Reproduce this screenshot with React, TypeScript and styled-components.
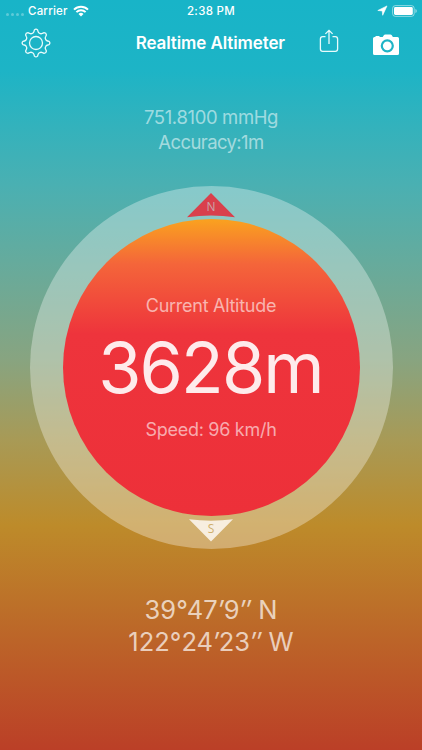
// App.tsx

import styled, { createGlobalStyle } from 'styled-components';

const reading = {
  pressure: '751.8100 mmHg',
  accuracy: 'Accuracy:1m',
  altitude: '3628m',
  speed: 'Speed: 96 km/h',
};

const WifiIcon = () => (
  <svg width="16" height="12" viewBox="0 0 16 12" fill="none" stroke="#fff" strokeWidth="2">
    <path d="M1 4.6a10 10 0 0 1 14 0" />
    <path d="M3.4 7.1a6.6 6.6 0 0 1 9.2 0" />
    <path d="M8 11.6 5.5 9a3.5 3.5 0 0 1 5 0z" fill="#fff" stroke="none" />
  </svg>
);

const LocationIcon = () => (
  <svg width="11" height="11" viewBox="0 0 11 11" fill="#fff">
    <path d="M10 .9.8 5.5l4.4.4.5 4.4z" stroke="#fff" strokeWidth=".6" />
  </svg>
);

const BatteryIcon = () => (
  <svg width="26" height="12" viewBox="0 0 26 12">
    <rect x=".6" y=".6" width="21.6" height="10.8" rx="2.8" fill="none" stroke="#fff" strokeOpacity=".5" />
    <rect x="2" y="2" width="18.8" height="8" rx="1.4" fill="#fff" />
    <path d="M23.4 4v4c.9-.3 1.4-1.1 1.4-2s-.5-1.7-1.4-2z" fill="#fff" fillOpacity=".5" />
  </svg>
);

const GearIcon = () => (
  <svg width="30" height="30" viewBox="-15 -15 30 30" fill="none" stroke="#e9fbfc" strokeWidth="1.3" strokeLinejoin="round">
    <circle r="6.5" />
    <path d="M-3.7 -9.6Q-2.3 -10.1 -2 -11.6L-1.6 -13.1Q0 -14.6 1.6 -13.1L2 -11.6Q2.3 -10.1 3.7 -9.6Q5.1 -8.9 6.5 -9.7L8.1 -10.4Q10.2 -10.2 10.4 -8.1L9.7 -6.5Q8.9 -5.1 9.6 -3.7Q10.1 -2.3 11.6 -2L13.1 -1.6Q14.6 0 13.1 1.6L11.6 2Q10.1 2.3 9.6 3.7Q8.9 5.1 9.7 6.5L10.4 8.1Q10.2 10.2 8.1 10.4L6.5 9.7Q5.1 8.9 3.7 9.6Q2.3 10.1 2 11.6L1.6 13.1Q0 14.6 -1.6 13.1L-2 11.6Q-2.3 10.1 -3.7 9.6Q-5.1 8.9 -6.5 9.7L-8.1 10.4Q-10.2 10.2 -10.4 8.1L-9.7 6.5Q-8.9 5.1 -9.6 3.7Q-10.1 2.3 -11.6 2L-13.1 1.6Q-14.6 0 -13.1 -1.6L-11.6 -2Q-10.1 -2.3 -9.6 -3.7Q-8.9 -5.1 -9.7 -6.5L-10.4 -8.1Q-10.2 -10.2 -8.1 -10.4L-6.5 -9.7Q-5.1 -8.9 -3.7 -9.6Z" />
  </svg>
);

const ShareIcon = () => (
  <svg width="20" height="24" viewBox="0 0 20 24" fill="none" stroke="#e9fbfc" strokeWidth="1.3">
    <path d="M6.5 7.7H3.7A2.3 2.3 0 0 0 1.4 10v10a2.3 2.3 0 0 0 2.3 2.3h12.6a2.3 2.3 0 0 0 2.3-2.3V10a2.3 2.3 0 0 0-2.3-2.3h-2.8" />
    <path d="M10 15V1.3M6.4 4.9 10 1.3l3.6 3.6" />
  </svg>
);

const CameraIcon = () => (
  <svg width="26" height="22" viewBox="0 0 26 22">
    <path
      d="M1.5 3h1V2h4v1h3.2L11 1q.4-.6 1.2-.6h5.2q.8 0 1.2.6l1.3 2h4.6Q26 3 26 4.5v15q0 1.5-1.5 1.5h-23Q0 21 0 19.5v-15Q0 3 1.5 3z"
      fill="#fff"
    />
    <circle cx="14.3" cy="11.8" r="5.5" fill="none" stroke="#1fb4c6" strokeWidth="2.2" />
  </svg>
);

const NorthMarker = () => (
  <Marker $top={7} width="48" height="25" viewBox="0 0 48 25">
    <path d="M24 0 48 24.3Q24 20.7 0 24.3z" fill="#d9404c" />
    <text x="24" y="18.4" fill="#c9a5aa">N</text>
  </Marker>
);

const SouthMarker = () => (
  <Marker $top={332.5} width="44" height="23" viewBox="0 0 44 23">
    <path d="M22 22.5 0 .3Q22 3 44 .3z" fill="#f7eee0" />
    <text x="22" y="14.4" fill="#cfae6c">S</text>
  </Marker>
);

const App = () => {
  return (
    <Screen>
      <GlobalStyle />
      <StatusBar>
        <Carrier>
          <SignalDots>
            <i />
            <i />
            <i />
            <i />
          </SignalDots>
          <span>Carrier</span>
          <WifiIcon />
        </Carrier>
        <Clock>2:38 PM</Clock>
        <StatusIcons>
          <LocationIcon />
          <BatteryIcon />
        </StatusIcons>
      </StatusBar>

      <NavBar>
        <IconButton aria-label="Settings"><GearIcon /></IconButton>
        <Title>Realtime Altimeter</Title>
        <IconButton aria-label="Share" $lift={4}><ShareIcon /></IconButton>
        <IconButton aria-label="Camera" $drop={3}><CameraIcon /></IconButton>
      </NavBar>

      <Pressure>
        <Line $spacing={-0.37}>{reading.pressure}</Line>
        <Line $spacing={-0.6}>{reading.accuracy}</Line>
      </Pressure>

      <Compass>
        <NorthMarker />
        <SouthMarker />
        <Dial>
          <Label>Current Altitude</Label>
          <Altitude>{reading.altitude}</Altitude>
          <Label>{reading.speed}</Label>
        </Dial>
      </Compass>

      <Coordinates>
        <Line $spacing={0.1}>39°47<em>′</em>9<em>″</em> N</Line>
        <Line $spacing={0}>122°24<em>′</em>23<em>″</em> W</Line>
      </Coordinates>
    </Screen>
  );
};

const GlobalStyle = createGlobalStyle`
  body {
    margin: 0;
    font-family: Inter, 'Liberation Sans', sans-serif;
  }
`;

const Screen = styled.div`
  box-sizing: border-box;
  display: flex;
  flex-direction: column;
  align-items: center;
  width: 422px;
  height: 750px;
  overflow: hidden;
  color: white;
  background: linear-gradient(
    #18b4c8 0,
    #1db4c6 70px,
    #4ab0b2 185px,
    #6aaa99 275px,
    #88a480 360px,
    #a89a56 440px,
    #bd8b2a 525px,
    #bb3f27 750px
  );
`;

const StatusBar = styled.div`
  box-sizing: border-box;
  display: grid;
  grid-template-columns: 1fr auto 1fr;
  align-items: center;
  width: 100%;
  height: 21px;
  padding: 0 4px 0 6px;
  font-size: 11.5px;
`;

const Carrier = styled.div`
  display: flex;
  align-items: center;
  font-weight: 500;
  letter-spacing: 0.2px;

  svg {
    margin-left: 5px;
  }
`;

const SignalDots = styled.div`
  display: flex;
  gap: 2px;
  margin: 7px 4px 0 0;

  i {
    width: 3px;
    height: 3px;
    border-radius: 50%;
    background: rgba(255, 255, 255, 0.3);
  }
`;

const Clock = styled.div`
  margin-right: 2px;
  font-weight: 500;
  letter-spacing: 0.3px;
`;

const StatusIcons = styled.div`
  display: flex;
  align-items: center;
  justify-content: flex-end;
  gap: 4px;
`;

const NavBar = styled.div`
  box-sizing: border-box;
  display: grid;
  grid-template-columns: 30px 200px 20px 26px;
  column-gap: 34px;
  align-items: center;
  width: 100%;
  height: 44px;
  padding-left: 21px;
`;

const IconButton = styled.button<{ $lift?: number; $drop?: number }>`
  display: flex;
  padding: ${(props) => props.$drop ?? 0}px 0 ${(props) => props.$lift ?? 0}px;
  border: none;
  background: none;
`;

const Title = styled.h1`
  margin: 0;
  font-size: 17px;
  font-weight: 600;
  line-height: 24px;
  letter-spacing: -0.1px;
  text-align: right;
  white-space: nowrap;
`;

const Pressure = styled.div`
  margin-top: 40px;
  font-size: 18.5px;
  line-height: 25px;
  text-align: center;
  color: rgba(255, 255, 255, 0.55);
`;

const Line = styled.div<{ $spacing: number }>`
  letter-spacing: ${(props) => props.$spacing}px;
  white-space: nowrap;
`;

const Compass = styled.div`
  position: relative;
  box-sizing: border-box;
  flex: none;
  width: 363px;
  height: 363px;
  margin-top: 31px;
  padding: 33px;
  border-radius: 50%;
  background: rgba(255, 255, 255, 0.33);
`;

const Marker = styled.svg<{ $top: number }>`
  position: absolute;
  top: ${(props) => props.$top}px;
  left: 50%;
  transform: translateX(-50%);

  text {
    font-family: 'Open Sans', sans-serif;
    font-size: 12px;
    text-anchor: middle;
  }
`;

const Dial = styled.div`
  box-sizing: border-box;
  display: flex;
  flex-direction: column;
  align-items: center;
  width: 297px;
  height: 297px;
  padding-top: 75px;
  border-radius: 50%;
  background: linear-gradient(#faa21f 0, #f4653a 45px, #ee343c 115px, #ed3039 100%);
`;

const Label = styled.div`
  font-size: 18px;
  line-height: 24px;
  letter-spacing: -0.28px;
  color: rgba(255, 255, 255, 0.6);
`;

const Altitude = styled.div`
  margin: 10px 0;
  padding-right: 1px;
  font-size: 70px;
  line-height: 80px;
  letter-spacing: -1.9px;
  color: rgba(255, 255, 255, 0.9);
`;

const Coordinates = styled.div`
  margin-top: 45px;
  font-size: 25.5px;
  line-height: 32px;
  text-align: center;
  color: rgba(255, 255, 255, 0.7);
`;

export default App;
